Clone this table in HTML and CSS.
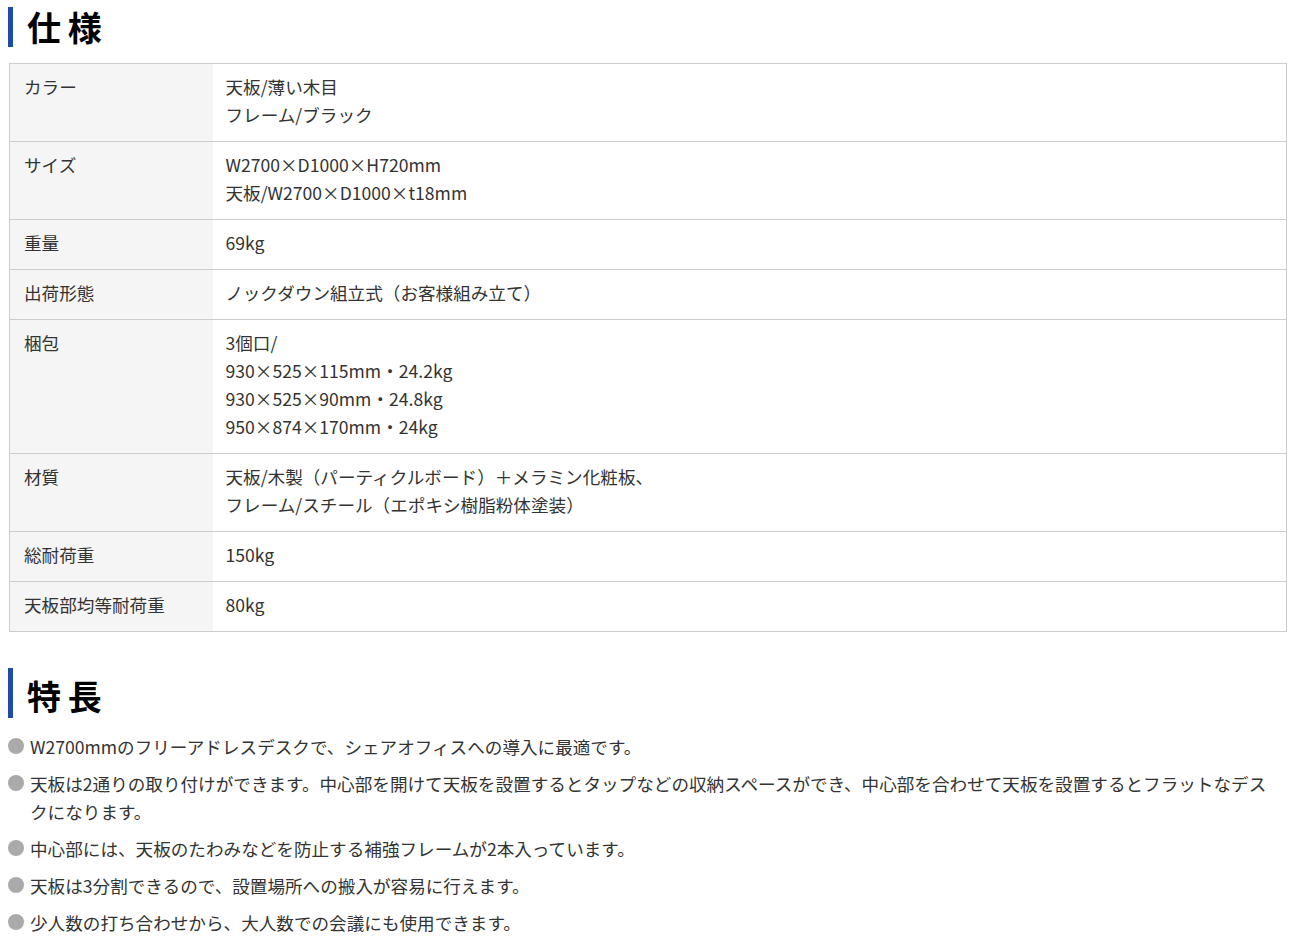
FILE: index.html
```html
<!DOCTYPE html>
<html lang="ja">
<head>
    <meta charset="UTF-8">
    <meta name="viewport" content="width=device-width, initial-scale=1.0">
    <title>仕様・特長</title>
    <link rel="stylesheet" href="styles.css">
</head>
<body>
    <section class="spec">
        <h2 class="sec-title">仕様</h2>
        <table class="spec-table">
            <tr>
                <th>カラー</th>
                <td>天板/薄い木目<br>フレーム/ブラック</td>
            </tr>
            <tr>
                <th>サイズ</th>
                <td>W2700×D1000×H720mm<br>天板/W2700×D1000×t18mm</td>
            </tr>
            <tr>
                <th>重量</th>
                <td>69kg</td>
            </tr>
            <tr>
                <th>出荷形態</th>
                <td>ノックダウン組立式（お客様組み立て）</td>
            </tr>
            <tr>
                <th>梱包</th>
                <td>3個口/<br>930×525×115mm・24.2kg<br>930×525×90mm・24.8kg<br>950×874×170mm・24kg</td>
            </tr>
            <tr>
                <th>材質</th>
                <td>天板/木製（パーティクルボード）＋メラミン化粧板、<br>フレーム/スチール（エポキシ樹脂粉体塗装）</td>
            </tr>
            <tr>
                <th>総耐荷重</th>
                <td>150kg</td>
            </tr>
            <tr>
                <th>天板部均等耐荷重</th>
                <td>80kg</td>
            </tr>
        </table>
    </section>

    <section class="feature">
        <h2 class="sec-title sec-title--tall">特長</h2>
        <ul class="feature-list">
            <li>W2700mmのフリーアドレスデスクで、シェアオフィスへの導入に最適です。</li>
            <li>天板は2通りの取り付けができます。中心部を開けて天板を設置するとタップなどの収納スペースができ、中心部を合わせて天板を設置するとフラットなデスクになります。</li>
            <li>中心部には、天板のたわみなどを防止する補強フレームが2本入っています。</li>
            <li>天板は3分割できるので、設置場所への搬入が容易に行えます。</li>
            <li>少人数の打ち合わせから、大人数での会議にも使用できます。</li>
        </ul>
    </section>
</body>
</html>
```

FILE: styles.css
```css
* {
    margin: 0;
    padding: 0;
    box-sizing: border-box;
}

body {
    font-family: "Noto Sans CJK JP", "Noto Sans", sans-serif;
    font-size: 17.6px;
    line-height: 28px;
    color: #333;
    background: #fff;
    padding: 7px 10px 0 8px;
}

.sec-title {
    border-left: 5px solid #1b4ca9;
    padding-left: 14px;
    font-size: 34px;
    line-height: 40px;
    font-weight: 700;
    letter-spacing: 0.2em;
    color: #000;
}

.sec-title--tall {
    padding-top: 8px;
    padding-bottom: 2px;
}

.spec-table {
    width: calc(100% - 1px);
    margin: 16px 0 0 1px;
    border-collapse: collapse;
    border: 1px solid #ccc;
}

.spec-table th,
.spec-table td {
    border-top: 1px solid #ccc;
    border-bottom: 1px solid #ccc;
    text-align: left;
    vertical-align: top;
    font-weight: 400;
    padding: 9px 13px 12px 13px;
}

.spec-table th {
    width: 203px;
    background: #f5f5f5;
    padding-left: 14px;
}

.feature {
    margin-top: 36px;
}

.feature-list {
    list-style: none;
    margin-top: 15px;
    padding-right: 16px;
}

.feature-list li {
    display: flex;
    margin-bottom: 9px;
}

.feature-list li::before {
    content: "";
    flex: none;
    width: 16px;
    height: 16px;
    margin: 5px 6px 0 0;
    border-radius: 50%;
    background: #aaa;
}
```
